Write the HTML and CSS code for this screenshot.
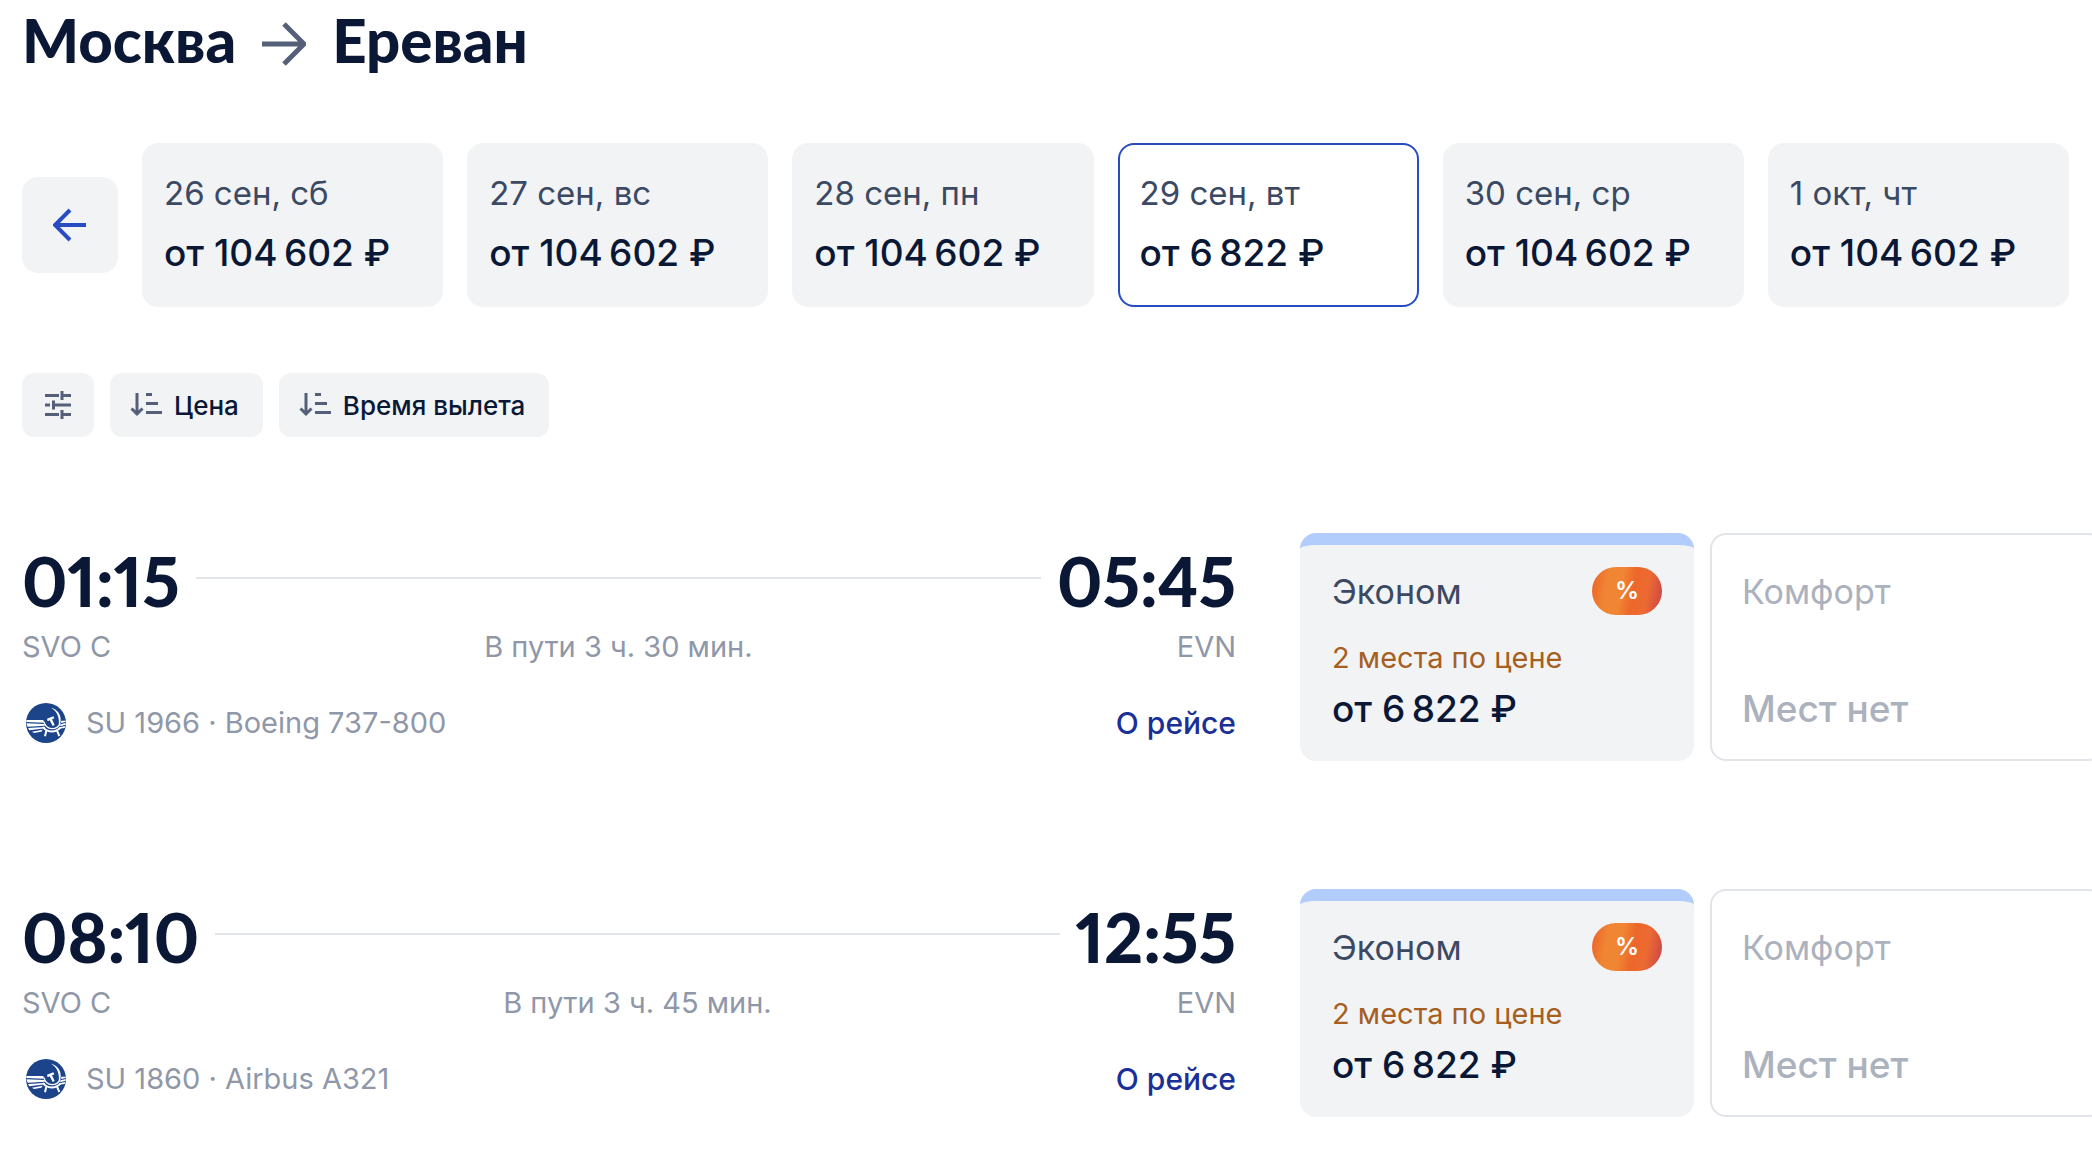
FILE: index.html
```html
<!DOCTYPE html>
<html lang="ru">
<head>
  <meta charset="utf-8">
  <title>Москва – Ереван</title>
  <link rel="stylesheet" href="styles.css">
</head>
<body>
  <!-- shared icons -->
  <svg class="sprite" aria-hidden="true">
    <symbol id="icon-sort" viewBox="0 0 32 32">
      <path d="M7 4v22M1.500 19.500 7 25l5.500-5.500" fill="none" stroke="currentColor" stroke-width="3"/>
      <path d="M16 4h6v3h-6zM16 13h12v3H16zM16 22h16v3H16z" fill="currentColor"/>
    </symbol>
    <symbol id="logo-airline" viewBox="0 0 120 120">
      <circle cx="60" cy="60" r="60" fill="#1c448a"/>
      <path d="M75 14c19 5 31 20 29 40-1 6-3 10-6 14 4-24-5-44-23-54z" fill="#fff"/>
      <path d="M1 51h51l2 8L1 57zM1 61l54 2 2 5-52 3zM6 75l50-3 2 4-48 6zM18 86l32-6-4 6-22 4zM106 53h13v4l-14 3zM104 64l15-4v5l-17 5zM100 73l18-4-2 6-18 2z" fill="#fff"/>
      <path d="M54 56c3 14 13 21 24 21s20-6 25-16" fill="none" stroke="#fff" stroke-width="4"/>
      <path d="M51 72c12 17 38 18 52 2" fill="none" stroke="#fff" stroke-width="6"/>
      <path d="M63 47l19-7 3 6-7 3 8 17-6 3-9-17-6 3z" fill="#fff"/>
      <path d="M61 83l-4 17M93 83l7 16" fill="none" stroke="#fff" stroke-width="6"/>
    </symbol>
  </svg>

  <main class="page">
    <h1 class="route">
      <span>Москва</span>
      <svg class="route-arrow" viewBox="0 0 44 44" aria-hidden="true"><path d="M0 22h41M22 2l20 20-20 20" fill="none" stroke="currentColor" stroke-width="5"/></svg>
      <span>Ереван</span>
    </h1>

    <div class="dates">
      <button class="dates-prev" type="button" aria-label="Назад">
        <svg viewBox="0 0 34 34" aria-hidden="true"><path d="M33 17H3M17 2 2 17l15 15" fill="none" stroke="currentColor" stroke-width="4"/></svg>
      </button>
      <button class="date" type="button"><span class="date-day">26 сен, сб</span><span class="price">от 104&#8201;602 ₽</span></button>
      <button class="date" type="button"><span class="date-day">27 сен, вс</span><span class="price">от 104&#8201;602 ₽</span></button>
      <button class="date" type="button"><span class="date-day">28 сен, пн</span><span class="price">от 104&#8201;602 ₽</span></button>
      <button class="date date-active" type="button"><span class="date-day">29 сен, вт</span><span class="price">от 6&#8201;822 ₽</span></button>
      <button class="date" type="button"><span class="date-day">30 сен, ср</span><span class="price">от 104&#8201;602 ₽</span></button>
      <button class="date" type="button"><span class="date-day">1 окт, чт</span><span class="price">от 104&#8201;602 ₽</span></button>
    </div>

    <div class="filters">
      <button class="filter filter-icon" type="button" aria-label="Фильтры">
        <svg viewBox="0 0 26 28" aria-hidden="true"><path d="M0 4.500h14M17 0v9M17 4.500h9M0 14h5M8.500 9.500v9M8.500 14H26M0 23.500h14M17 19v9M17 23.500h9" fill="none" stroke="currentColor" stroke-width="3"/></svg>
      </button>
      <button class="filter" type="button"><svg class="filter-sort" aria-hidden="true"><use href="#icon-sort"/></svg>Цена</button>
      <button class="filter" type="button"><svg class="filter-sort" aria-hidden="true"><use href="#icon-sort"/></svg>Время вылета</button>
    </div>

    <section class="flight">
      <div class="flight-info">
        <div class="flight-times">
          <time class="time">01:15</time>
          <div class="line"></div>
          <time class="time">05:45</time>
          <span class="muted">SVO C</span>
          <span class="muted duration">В пути 3 ч. 30 мин.</span>
          <span class="muted airport-to">EVN</span>
        </div>
        <div class="flight-about">
          <svg class="logo" aria-hidden="true"><use href="#logo-airline"/></svg>
          <span class="muted">SU 1966 · Boeing 737-800</span>
          <a class="about-link" href="#">О рейсе</a>
        </div>
      </div>
      <div class="fares">
        <button class="fare fare-open" type="button">
          <span class="fare-head"><span class="fare-name">Эконом</span><span class="discount">%</span></span>
          <span class="fare-seats">2 места по цене</span>
          <span class="price">от 6&#8201;822 ₽</span>
        </button>
        <button class="fare fare-empty" type="button" disabled>
          <span class="fare-head"><span class="fare-name">Комфорт</span></span>
          <span class="price">Мест нет</span>
        </button>
      </div>
    </section>

    <section class="flight">
      <div class="flight-info">
        <div class="flight-times">
          <time class="time">08:10</time>
          <div class="line"></div>
          <time class="time">12:55</time>
          <span class="muted">SVO C</span>
          <span class="muted duration">В пути 3 ч. 45 мин.</span>
          <span class="muted airport-to">EVN</span>
        </div>
        <div class="flight-about">
          <svg class="logo" aria-hidden="true"><use href="#logo-airline"/></svg>
          <span class="muted">SU 1860 · Airbus A321</span>
          <a class="about-link" href="#">О рейсе</a>
        </div>
      </div>
      <div class="fares">
        <button class="fare fare-open" type="button">
          <span class="fare-head"><span class="fare-name">Эконом</span><span class="discount">%</span></span>
          <span class="fare-seats">2 места по цене</span>
          <span class="price">от 6&#8201;822 ₽</span>
        </button>
        <button class="fare fare-empty" type="button" disabled>
          <span class="fare-head"><span class="fare-name">Комфорт</span></span>
          <span class="price">Мест нет</span>
        </button>
      </div>
    </section>
  </main>
</body>
</html>
```
FILE: styles.css
```css
* {
  box-sizing: border-box;
}
body {
  margin: 0;
  background: #fff;
  color: #0a1836;
  font-family: Inter, "Liberation Sans", sans-serif;
}
button {
  border: 0;
  margin: 0;
  padding: 0;
  font-family: inherit;
  color: inherit;
  text-align: left;
  cursor: pointer;
}
.sprite {
  display: none;
}
.page {
  padding: 8px 0 0 22px;
  overflow: hidden;
}
.route {
  display: flex;
  align-items: center;
  gap: 26px;
  margin: 0;
  font-family: Lato, sans-serif;
  font-weight: 900;
  font-size: 60px;
  line-height: 64px;
}
.route-arrow {
  width: 44px;
  height: 44px;
  margin-top: 8px;
  color: #556078;
}

/* dates */
.dates {
  display: flex;
  align-items: center;
  gap: 24px;
  margin: 71px 23px 0 0;
}
.dates-prev {
  display: flex;
  align-items: center;
  justify-content: center;
  flex: 0 0 96px;
  height: 96px;
  border-radius: 16px;
  background: #f1f3f5;
  color: #274cc4;
}
.dates-prev svg {
  width: 34px;
  height: 34px;
}
.date {
  display: flex;
  flex: 1 1 0;
  flex-direction: column;
  gap: 16px;
  padding: 28px 20px;
  border: 2px solid #f1f3f5;
  border-radius: 16px;
  background: #f1f3f5;
  white-space: nowrap;
}
.date-active {
  border-color: #274cc4;
  background: #fff;
}
.date-day {
  font-size: 33px;
  line-height: 40px;
  color: #3b4963;
}
.price {
  font-size: 37px;
  line-height: 48px;
  font-weight: 500;
}

/* filters */
.filters {
  display: flex;
  gap: 16px;
  margin-top: 66px;
}
.filter {
  display: flex;
  align-items: center;
  gap: 12px;
  height: 64px;
  padding: 0 24px 0 20px;
  border-radius: 12px;
  background: #f1f3f5;
  font-size: 26px;
  font-weight: 500;
}
.filter svg {
  color: #556078;
}
.filter-icon {
  justify-content: center;
  width: 72px;
  padding: 0;
}
.filter-icon svg {
  width: 26px;
  height: 28px;
}
.filter-sort {
  width: 32px;
  height: 32px;
}

/* flights */
.flight {
  display: grid;
  grid-template-columns: 1214fr 792fr;
  gap: 64px;
  margin-top: 96px;
  padding-bottom: 32px;
}
.flight-times {
  display: grid;
  grid-template-columns: auto 1fr auto;
  column-gap: 16px;
  padding-top: 12px;
}
.time {
  font-family: Lato, sans-serif;
  font-weight: 900;
  font-size: 68px;
  line-height: 72px;
  font-variant-numeric: proportional-nums;
}
.line {
  height: 2px;
  margin-top: 32px;
  background: #e1e4e9;
}
.muted {
  font-size: 29px;
  line-height: 36px;
  color: #8f97a8;
}
.flight-times .muted {
  margin-top: 12px;
}
.duration {
  text-align: center;
}
.airport-to {
  text-align: right;
}
.flight-about {
  display: flex;
  align-items: center;
  gap: 20px;
  margin-top: 38px;
  padding-left: 4px;
}
.logo {
  width: 40px;
  height: 40px;
}
.about-link {
  margin-left: auto;
  font-size: 30px;
  line-height: 36px;
  font-weight: 500;
  color: #1b2f96;
  text-decoration: none;
}
.fares {
  display: flex;
  gap: 16px;
  min-width: 0;
}
.fare {
  display: flex;
  flex: 0 0 394px;
  flex-direction: column;
  justify-content: space-between;
  height: 228px;
  padding: 32px 32px 28px;
  border-radius: 16px;
}
.fare-open {
  padding-top: 20px;
  border-top: 12px solid #b2cdfb;
  background: #f1f3f5;
}
.fare-empty {
  padding: 30px 30px 26px;
  border: 2px solid #e1e4e9;
  background: #fff;
  color: #abb1bd;
}
.fare-head {
  display: flex;
  align-items: center;
  justify-content: space-between;
  height: 52px;
}
.fare-name {
  font-size: 34px;
}
.fare-open .fare-name {
  color: #3b4963;
}
.discount {
  width: 70px;
  border-radius: 24px;
  background: linear-gradient(100deg, #ec672b 4%, #f08533 22%, #f08533 42%, #ec672b 58%, #ec6a32 76%, #cb4646 98%);
  color: #fff;
  font-size: 24px;
  line-height: 48px;
  font-weight: 600;
  text-align: center;
}
.fare-seats {
  margin-top: 14px;
  font-size: 29px;
  line-height: 40px;
  color: #a65f20;
}
```
